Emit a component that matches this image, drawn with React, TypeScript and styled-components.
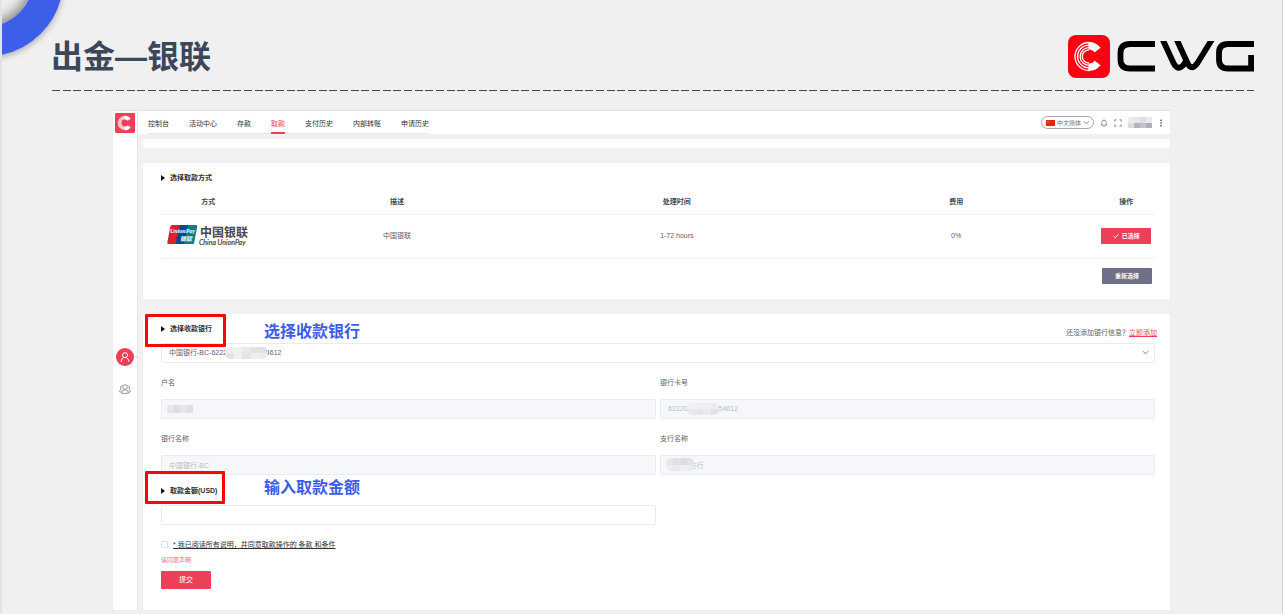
import React from "react";
import styled, { createGlobalStyle } from "styled-components";

const RED = "#ec3f58";
const NBSP = "\u00a0";

const GlobalStyle = createGlobalStyle`
  *, *::before, *::after { box-sizing: border-box; }
  html, body { margin: 0; padding: 0; background: #f0f0f0; }
  body {
    font-family: "Liberation Sans", "Noto Sans CJK SC", sans-serif;
    font-size: 7px;
    line-height: 10px;
    color: #606266;
  }
  button, input, select { font: inherit; color: inherit; margin: 0; }
`;

const Slide = styled.div`
  position: relative;
  min-height: 100vh;
  overflow: hidden;
  padding-bottom: 4px;
  background: #f0f0f0;
  border-left: 2px solid #e3e3e3;
  border-right: 1px solid #d4d4d4;
`;

const Ring = styled.div`
  position: absolute;
  left: -91px;
  top: -96px;
  width: 152px;
  height: 152px;
  border-radius: 50%;
  border: 30px solid #3d5ee9;
  box-shadow: 0 2px 6px rgba(0, 0, 0, 0.3), inset -2px -2px 14px rgba(0, 0, 0, 0.5);
`;

const SlideHeader = styled.header`
  display: flex;
  align-items: center;
  justify-content: space-between;
  height: 48px;
  margin: 32px 28px 0 49px;
`;

const SlideTitle = styled.h1`
  align-self: flex-start;
  margin: 0;
  font: bold 32px/50px "Liberation Sans", "Noto Sans CJK SC", sans-serif;
  color: #3b475b;
`;

const DashedRule = styled.hr`
  height: 1px;
  margin: 10px 28px 20px 50px;
  border: 0;
  background: linear-gradient(
      90deg,
      #3f4a5e 8px,
      transparent 8px 11px,
      #3f4a5e 11px 19px,
      transparent 19px 21px,
      #3f4a5e 21px 29px,
      transparent 29px
    )
    0 0 / 32px 1px;
`;

const AppFrame = styled.div`
  display: grid;
  grid-template-columns: 25px 1fr;
  margin: 0 112px 0 111px;
  background: #f1f1f1;
  box-shadow: 0 -1px 1px rgba(0, 0, 0, 0.05);
`;

const Sidebar = styled.aside`
  display: flex;
  flex-direction: column;
  align-items: center;
  padding-top: 2px;
  background: #fff;
  border-right: 1px solid #e6e6e6;
`;

const SideNav = styled.nav`
  display: flex;
  flex-direction: column;
  align-items: center;
  gap: 14px;
  width: 100%;
  margin-top: 215px;
`;

const SideLink = styled.a<{ $active?: boolean }>`
  position: relative;
  display: flex;
  align-items: center;
  justify-content: center;
  width: 18px;
  height: 18px;
  border-radius: 50%;
  background: ${(p) => (p.$active ? RED : "transparent")};
  color: ${(p) => (p.$active ? "#fff" : "#7d8086")};
`;

const Notch = styled.span`
  position: absolute;
  left: 19px;
  top: 6px;
  border: solid transparent;
  border-width: 3px 3px 3px 0;
  border-right-color: #e6e6e6;
`;

const TopBar = styled.div`
  display: flex;
  justify-content: space-between;
  height: 23px;
  padding: 0 6px 0 10px;
  background: #fff;
`;

const Tabs = styled.nav`
  display: flex;
  gap: 20px;
  border-bottom: 1px solid #e4e7ed;
`;

const Tab = styled.a<{ $active?: boolean }>`
  height: 23px;
  padding-top: 2px;
  line-height: 22px;
  text-decoration: none;
  color: ${(p) => (p.$active ? RED : "#303133")};
  border-bottom: ${(p) => (p.$active ? `2px solid ${RED}` : "0")};
`;

const Tools = styled.div`
  display: flex;
  align-items: center;
  color: #6e7176;
`;

const ToolButton = styled.button`
  display: flex;
  width: 8px;
  height: 8px;
  margin-right: 6px;
  padding: 0;
  border: 0;
  background: none;
`;

const LangPill = styled.label`
  display: flex;
  align-items: center;
  gap: 2px;
  width: 53px;
  height: 13px;
  margin-right: 6px;
  padding: 0 3px 0 4px;
  border: 1px solid #a5a7ab;
  border-radius: 7px;
`;

const LangSelect = styled.select`
  flex: 1;
  min-width: 0;
  padding: 0;
  border: 0;
  outline: 0;
  appearance: none;
  background: none;
  font-size: 6px;
`;

const Main = styled.main`
  display: flex;
  flex-direction: column;
  gap: 15px;
  padding-left: 5px;
`;

const Strip = styled.div`
  height: 9px;
  margin-top: 5px;
  background: #fff;
  border-radius: 2px;
`;

const Card = styled.section`
  padding: 10px 15px 15px 18px;
  background: #fff;
  border-radius: 2px 2px 0 0;
`;

const FormCard = styled(Card).attrs({ as: "form" })`
  padding-bottom: 21px;
`;

const SectionTitle = styled.h2`
  position: relative;
  z-index: 1;
  display: flex;
  align-items: center;
  gap: 5px;
  margin: 0;
  font-size: 7px;
  line-height: 10px;
  font-weight: bold;
  color: #303133;
  &::before {
    content: "";
    border: solid transparent;
    border-width: 3px 0 3px 4px;
    border-left-color: #111;
  }
`;

const AmountTitle = styled(SectionTitle)`
  margin: 11px 0 9px;
`;

const Highlight = styled.span<{ $w: number; $top: number }>`
  position: absolute;
  left: -16px;
  top: ${(p) => p.$top}px;
  width: ${(p) => p.$w}px;
  height: 33px;
  border: 3px solid #f90606;
  border-radius: 1px;
  pointer-events: none;
`;

const Callout = styled.span<{ $top: number }>`
  position: absolute;
  left: 103px;
  top: ${(p) => p.$top}px;
  font: bold 16px/20px "Noto Sans CJK SC", sans-serif;
  color: #3b5de8;
  white-space: nowrap;
`;

const MethodTable = styled.table`
  width: 100%;
  margin-top: 8px;
  border-collapse: collapse;
  table-layout: fixed;
  text-align: center;
  th, td {
    padding: 0;
    border-bottom: 1px solid #f2f2f3;
  }
  th { height: 23px; color: #45494f; }
  td { height: 44px; }
`;

const Button = styled.button<{ $tone?: "slate"; $h?: number }>`
  display: inline-flex;
  align-items: center;
  justify-content: center;
  gap: 3px;
  width: 50px;
  height: ${(p) => p.$h ?? 16}px;
  padding: 0;
  border: 0;
  border-radius: 1px;
  background: ${(p) => (p.$tone === "slate" ? "#6c7189" : RED)};
  color: #fff;
  font-size: ${(p) => (p.$h ? 7 : 6)}px;
  font-weight: ${(p) => (p.$h ? "normal" : "bold")};
`;

const CardFooter = styled.div`
  display: flex;
  justify-content: flex-end;
  padding: 9px 3px 0 0;
`;

const CardHead = styled.div`
  display: flex;
  justify-content: space-between;
  align-items: flex-start;
  height: 19px;
`;

const AddBank = styled.p`
  margin: 4px -2px 0 0;
  a { color: ${RED}; }
`;

const Control = styled.div`
  position: relative;
  display: flex;
  align-items: center;
`;

const fieldBox = `
  width: 100%;
  height: 20px;
  padding: 0 7px;
  border: 1px solid #e8ebf0;
  border-radius: 2px;
  outline: 0;
  background: #fff;
`;

const Select = styled.select`
  ${fieldBox}
  appearance: none;
`;

const Input = styled.input`
  ${fieldBox}
  &:disabled {
    background: #f5f7fa;
    color: #b9bdc6;
  }
`;

const SelectArrow = styled.span`
  position: absolute;
  right: 6px;
  display: flex;
  pointer-events: none;
`;

const FieldGrid = styled.div`
  display: grid;
  grid-template-columns: 1fr 1fr;
  column-gap: 4px;
`;

const Field = styled.div`
  margin-top: 15px;
`;

const Label = styled.label`
  display: block;
  margin-bottom: 11px;
`;

const AgreeRow = styled.label`
  display: flex;
  align-items: center;
  gap: 5px;
  margin-top: 15px;
  color: #303133;
  text-decoration: underline;
`;

const CheckBox = styled.input`
  width: 7px;
  height: 7px;
  appearance: none;
  border: 1px solid #dcdfe6;
  border-radius: 1px;
`;

const ErrorText = styled.p`
  margin: 5px 0 6px;
  font-size: 6px;
  color: #f56c6c;
`;

const MosaicBox = styled.span<{ $x?: number; $w: number; $h: number; $round?: boolean }>`
  display: flex;
  flex-wrap: wrap;
  width: ${(p) => p.$w}px;
  height: ${(p) => p.$h}px;
  overflow: hidden;
  border-radius: ${(p) => (p.$round ? "5px" : "0")};
  ${(p) => (p.$x === undefined ? "margin-right: 6px;" : `position: absolute; left: ${p.$x}px;`)}
`;

const Tile = styled.i<{ $c: string; $n: number }>`
  width: calc(100% / ${(p) => p.$n});
  height: 50%;
  background: ${(p) => p.$c};
`;

type MosaicProps = { x?: number; w: number; h: number; round?: boolean; tiles: string[] };

const Mosaic = ({ x, w, h, round, tiles }: MosaicProps) => (
  <MosaicBox $x={x} $w={w} $h={h} $round={round}>
    {tiles.map((c, i) => (
      <Tile key={i} $c={c} $n={tiles.length / 2} />
    ))}
  </MosaicBox>
);

const Chevron = ({ size = 7 }: { size?: number }) => (
  <svg width={size} height={size} viewBox="0 0 7 7" fill="none" stroke="#6e7176" strokeWidth="0.9">
    <path d="M1 2.2 3.5 4.8 6 2.2" />
  </svg>
);

const CMark = ({ bg }: { bg: string }) => (
  <>
    <rect width="42" height="43" rx="8" fill={bg} />
    <g fill="none" stroke="#fff">
      <path d="M20.5 10.8A11 11 0 0 1 29.6 15M20.5 32.2A11 11 0 0 0 29.6 28" strokeWidth="7.4" />
      <path
        d="M21 7.5A14 14 0 0 0 21 35.500M21 10.100A11.400 11.400 0 0 0 21 32.900M21 12.600A8.900 8.900 0 0 0 21 30.400M21 14.800A6.700 6.700 0 0 0 21 28.200"
        strokeWidth="1.3"
      />
    </g>
  </>
);

const BrandLogo = () => (
  <svg width="186" height="43" viewBox="0 0 186 43" role="img" aria-label="CWG">
    <clipPath id="wordmark">
      <rect x="48" y="6" width="138" height="31" />
    </clipPath>
    <CMark bg="#ff0013" />
    <g fill="none" stroke="#000" strokeWidth="5.800" clipPath="url(#wordmark)">
      <path d="M87 9H62Q52.500 9 52.500 18V24.500Q52.500 33.500 62 33.500H87" />
      <path d="M93.500 2 105.500 28Q109.500 36 115 30.500L118 26" />
      <path d="M107.500 2 119.500 28Q123.500 36.500 129.500 28L145.500 2" />
      <path d="M186 9H160Q151 9 151 18V24.500Q151 33.500 160 33.500H183.100V20" />
    </g>
  </svg>
);

const AppLogo = () => (
  <svg width="20" height="20" viewBox="0 0 42 43" preserveAspectRatio="none">
    <rect width="42" height="43" rx="3" fill={RED} />
    <g fill="none" stroke="#fff">
      <path d="M20 10A11.500 11.500 0 0 1 30 14.500M20 33A11.500 11.500 0 0 0 30 28.500" strokeWidth="8" />
      <path d="M21 10A11.500 11.500 0 0 0 21 33" strokeWidth="8" opacity="0.7" />
    </g>
  </svg>
);

const UnionPayLogo = () => (
  <svg width="83" height="24" viewBox="0 0 83 24" role="img" aria-label="China UnionPay">
    <path d="M5 2H13L9 21H1.500Q0 21 .3 19.500L3.300 3.500Q3.600 2 5 2Z" fill="#d8232f" />
    <path d="M12.500 2H22L18 21H8.500Z" fill="#0a4a8a" />
    <path d="M21 2H29Q30.500 2 30.200 3.500L27.200 19.500Q27 21 25.500 21H17Z" fill="#0b7f86" />
    <g fill="#fff" fontStyle="italic" fontWeight="bold">
      <text x="3" y="10" fontSize="6" fontFamily="Liberation Serif, serif">UnionPay</text>
      <text x="13" y="18" fontSize="6" fontFamily="Noto Sans CJK SC, sans-serif">银联</text>
    </g>
    <g fill="#4b4543">
      <text x="33" y="14" fontSize="12" fontWeight="bold" fontFamily="Noto Sans CJK SC, sans-serif">中国银联</text>
      <text x="32" y="22" fontSize="7" fontStyle="italic" stroke="#4b4543" strokeWidth="0.2" fontFamily="Lato, sans-serif">
        China UnionPay
      </text>
    </g>
  </svg>
);

const Flag = () => (
  <svg width="9" height="6" viewBox="0 0 9 6">
    <rect width="9" height="6" fill="#de2910" />
    <circle cx="2" cy="2" r="0.8" fill="#f6a417" />
  </svg>
);

const UserIcon = () => (
  <svg width="12" height="12" viewBox="0 0 12 12" fill="none" stroke="currentColor" strokeWidth="1">
    <circle cx="6" cy="4.200" r="2.500" />
    <path d="M2 10.800Q2.300 7.600 4.800 6.500M10 10.800Q9.700 7.600 7.200 6.500" />
  </svg>
);

const GroupIcon = () => (
  <svg width="12" height="12" viewBox="0 0 12 12" fill="none" stroke="currentColor" strokeWidth="0.8">
    <circle cx="6" cy="4" r="2.300" />
    <path d="M2.500 10.300Q2.500 6.600 6 6.600T9.500 10.300ZM3.600 2.800A1.800 1.800 0 0 0 2.200 6Q.6 6.800.6 9H2.200M8.400 2.800A1.800 1.800 0 0 1 9.800 6Q11.400 6.800 11.400 9H9.800" />
  </svg>
);

const tabs = ["控制台", "活动中心", "存款", "取款", "支付历史", "内部转账", "申请历史"];
const blank = (n: number) => NBSP.repeat(n);

export default function App() {
  return (
    <>
      <GlobalStyle />
      <Slide>
        <Ring />
        <SlideHeader>
          <SlideTitle>出金—银联</SlideTitle>
          <BrandLogo />
        </SlideHeader>
        <DashedRule />

        <AppFrame>
          <Sidebar>
            <AppLogo />
            <SideNav>
              <SideLink href="#user" $active aria-label="用户">
                <UserIcon />
                <Notch />
              </SideLink>
              <SideLink href="#group" aria-label="团队">
                <GroupIcon />
              </SideLink>
            </SideNav>
          </Sidebar>

          <div>
            <TopBar>
              <Tabs>
                {tabs.map((t) => (
                  <Tab key={t} href="#tab" $active={t === "取款"}>
                    {t}
                  </Tab>
                ))}
              </Tabs>
              <Tools>
                <LangPill>
                  <Flag />
                  <LangSelect aria-label="语言">
                    <option>中文简体</option>
                  </LangSelect>
                  <Chevron />
                </LangPill>
                <ToolButton aria-label="通知">
                  <svg width="8" height="8" viewBox="0 0 8 8" fill="none" stroke="currentColor" strokeWidth="0.7">
                    <path d="M.8 6.200H7.200M1.800 6.200V3.500A2.200 2.200 0 0 1 6.200 3.500V6.200M4 .4V1.300M3.300 7.300H4.700" />
                  </svg>
                </ToolButton>
                <ToolButton aria-label="全屏">
                  <svg width="8" height="8" viewBox="0 0 8 8" fill="none" stroke="currentColor" strokeWidth="0.8">
                    <path d="M.8 2.600V.8H2.600M5.400.8H7.200V2.600M7.200 5.400V7.200H5.400M2.600 7.200H.8V5.400" />
                  </svg>
                </ToolButton>
                <Mosaic
                  w={24}
                  h={11}
                  tiles={["#ececee", "#e6e6e8", "#dedee1", "#e9e9eb", "#dcdce0", "#b4b5bb", "#c2c3c9", "#aeb0b8"]}
                />
                <svg width="6" height="8" viewBox="0 0 6 8" fill="#303133">
                  <circle cx="3" cy="1.200" r="0.8" />
                  <circle cx="3" cy="4" r="0.8" />
                  <circle cx="3" cy="6.800" r="0.8" />
                </svg>
              </Tools>
            </TopBar>

            <Main>
              <Strip />
              <Card>
                <SectionTitle>选择取款方式</SectionTitle>
                <MethodTable>
                  <colgroup>
                    <col style={{ width: "9.5%" }} />
                    <col style={{ width: "28.5%" }} />
                    <col style={{ width: "27.8%" }} />
                    <col style={{ width: "28.4%" }} />
                    <col style={{ width: "5.8%" }} />
                  </colgroup>
                  <thead>
                    <tr>
                      <th>方式</th>
                      <th>描述</th>
                      <th>处理时间</th>
                      <th>费用</th>
                      <th>操作</th>
                    </tr>
                  </thead>
                  <tbody>
                    <tr>
                      <td>
                        <UnionPayLogo />
                      </td>
                      <td>中国银联</td>
                      <td>1-72 hours</td>
                      <td>0%</td>
                      <td>
                        <Button type="button">
                          <svg width="6" height="6" viewBox="0 0 6 6" fill="none" stroke="#fff" strokeWidth="0.9">
                            <path d="M.6 3.200 2.300 4.800 5.500 1.200" />
                          </svg>
                          已选择
                        </Button>
                      </td>
                    </tr>
                  </tbody>
                </MethodTable>
                <CardFooter>
                  <Button type="button" $tone="slate">
                    重新选择
                  </Button>
                </CardFooter>
              </Card>

              <FormCard>
                <CardHead>
                  <SectionTitle>
                    选择收款银行
                    <Highlight $w={81} $top={-10} />
                    <Callout $top={-4}>选择收款银行</Callout>
                  </SectionTitle>
                  <AddBank>
                    还没添加银行信息？<a href="#add">立即添加</a>
                  </AddBank>
                </CardHead>
                <Control>
                  <Select aria-label="收款银行">
                    <option>{`中国银行-BC-6222${blank(20)}4612`}</option>
                  </Select>
                  <Mosaic
                    x={64}
                    w={43}
                    h={12}
                    round
                    tiles={["#eeeeef", "#f1f1f2", "#e9eaeb", "#e2e3e5", "#dfe0e2", "#e3e4e6", "#f0f0f1", "#e4e5e7", "#efeff0", "#ececed"]}
                  />
                  <SelectArrow>
                    <Chevron />
                  </SelectArrow>
                </Control>

                <FieldGrid>
                  <Field>
                    <Label htmlFor="holder">户名</Label>
                    <Control>
                      <Input id="holder" disabled />
                      <Mosaic
                        x={6}
                        w={26}
                        h={8}
                        tiles={["#e6e8eb", "#dee0e4", "#e5e7ea", "#dfe1e5", "#e4e6e9", "#d9dce1", "#e3e5e8", "#dcdfe4"]}
                      />
                    </Control>
                  </Field>
                  <Field>
                    <Label htmlFor="card">银行卡号</Label>
                    <Control>
                      <Input id="card" disabled defaultValue={`62220${blank(16)}54612`} />
                      <Mosaic
                        x={27}
                        w={32}
                        h={12}
                        round
                        tiles={["#f0f1f4", "#eceef1", "#eff0f3", "#eaecef", "#e6e8eb", "#e3e5e9", "#e8eaed", "#dfe2e6"]}
                      />
                    </Control>
                  </Field>
                  <Field>
                    <Label htmlFor="bank">银行名称</Label>
                    <Control>
                      <Input id="bank" disabled defaultValue="中国银行-BC" />
                    </Control>
                  </Field>
                  <Field>
                    <Label htmlFor="branch">支行名称</Label>
                    <Control>
                      <Input id="branch" disabled defaultValue={`${blank(11)}支行`} />
                      <Mosaic
                        x={6}
                        w={28}
                        h={13}
                        round
                        tiles={["#e6e8eb", "#dfe1e5", "#dcdee3", "#e2e4e8", "#ebedf0", "#e8eaed", "#eef0f3", "#e9ebee"]}
                      />
                    </Control>
                  </Field>
                </FieldGrid>

                <AmountTitle>
                  <label htmlFor="amount">取款金额(USD)</label>
                  <Highlight $w={80} $top={-15} />
                  <Callout $top={-10}>输入取款金额</Callout>
                </AmountTitle>
                <FieldGrid>
                  <Input id="amount" />
                </FieldGrid>

                <AgreeRow>
                  <CheckBox type="checkbox" />
                  <span>* 我已阅读所有说明，并同意取款操作的 条款 和条件</span>
                </AgreeRow>
                <ErrorText>请同意声明</ErrorText>
                <Button type="button" $h={18}>
                  提交
                </Button>
              </FormCard>
            </Main>
          </div>
        </AppFrame>
      </Slide>
    </>
  );
}
